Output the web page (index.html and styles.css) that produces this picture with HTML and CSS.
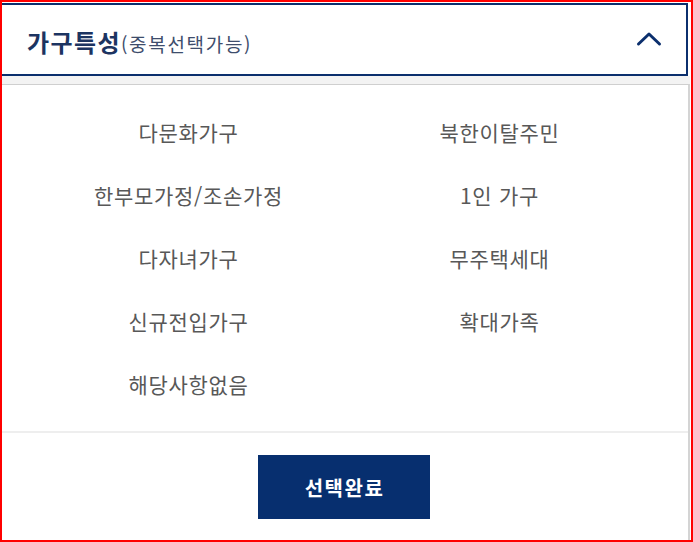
FILE: index.html
```html
<!DOCTYPE html>
<html lang="ko">
<head>
<meta charset="utf-8">
<link rel="stylesheet" href="styles.css">
</head>
<body>
<div class="frame">
  <div class="header">
    <div class="title"><span class="main">가구특성</span><span class="sub">(중복선택가능)</span></div>
    <svg class="chev" width="26" height="16" viewBox="0 0 26 16"><polyline points="2.5,13 13,3 23.5,13" fill="none" stroke="#0b2f6d" stroke-width="3" stroke-linecap="round" stroke-linejoin="round"/></svg>
  </div>
  <div class="gap"></div>
  <div class="content">
    <div class="grid">
      <div class="item">다문화가구</div>
      <div class="item">북한이탈주민</div>
      <div class="item">한부모가정/조손가정</div>
      <div class="item">1인 가구</div>
      <div class="item">다자녀가구</div>
      <div class="item">무주택세대</div>
      <div class="item">신규전입가구</div>
      <div class="item">확대가족</div>
      <div class="item">해당사항없음</div>
      <div class="item"></div>
    </div>
    <div class="footer">
      <button class="done">선택완료</button>
    </div>
  </div>
</div>
</body>
</html>
```

FILE: styles.css
```css
* { box-sizing: border-box; }
html, body { margin: 0; padding: 0; background: #fff; }
body { font-family: "Noto Sans CJK KR", "Noto Sans", sans-serif; }
.frame {
  width: 693px;
  height: 542px;
  border: 2px solid #ff0000;
  padding-top: 1px;
  display: flex;
  flex-direction: column;
  overflow: hidden;
}
.header {
  height: 73px;
  margin-right: 3px;
  border: 2px solid #0b2f6d;
  border-left: none;
  display: flex;
  align-items: center;
  justify-content: space-between;
  padding: 0 24px 0 25px;
  flex: none;
}
.title { display: flex; align-items: baseline; line-height: 1; padding-top: 4px; }
.main { font-size: 24px; font-weight: 700; color: #1c3461; letter-spacing: 1.4px; }
.sub { font-size: 19px; color: #3e4d6c; letter-spacing: 1.7px; }
.chev { display: block; margin-top: -1px; }
.gap { height: 8px; background: #f3f3f3; margin-right: 1px; flex: none; }
.content {
  flex: 1;
  border-top: 1px solid #cfcfcf;
  border-right: 2px solid #d4d4d4;
  margin-right: 1px;
  display: flex;
  flex-direction: column;
}
.grid {
  display: grid;
  grid-template-columns: 311px 311px;
  grid-auto-rows: 63px;
  padding: 15px 0 16px 31px;
  border-bottom: 2px solid #eeeeee;
}
.item {
  display: flex;
  align-items: center;
  justify-content: center;
  font-size: 21px;
  color: #585858;
  letter-spacing: 0.7px;
}
.footer {
  flex: 1;
  display: flex;
  justify-content: center;
  padding-top: 22px;
}
.done {
  width: 172px;
  height: 64px;
  border: none;
  background: #072f6f;
  color: #ffffff;
  font-family: "Noto Sans CJK KR", sans-serif;
  font-size: 20px;
  font-weight: 700;
  letter-spacing: 1.5px;
  margin-right: 2px;
  padding: 0 0 0 1px;
}
```
